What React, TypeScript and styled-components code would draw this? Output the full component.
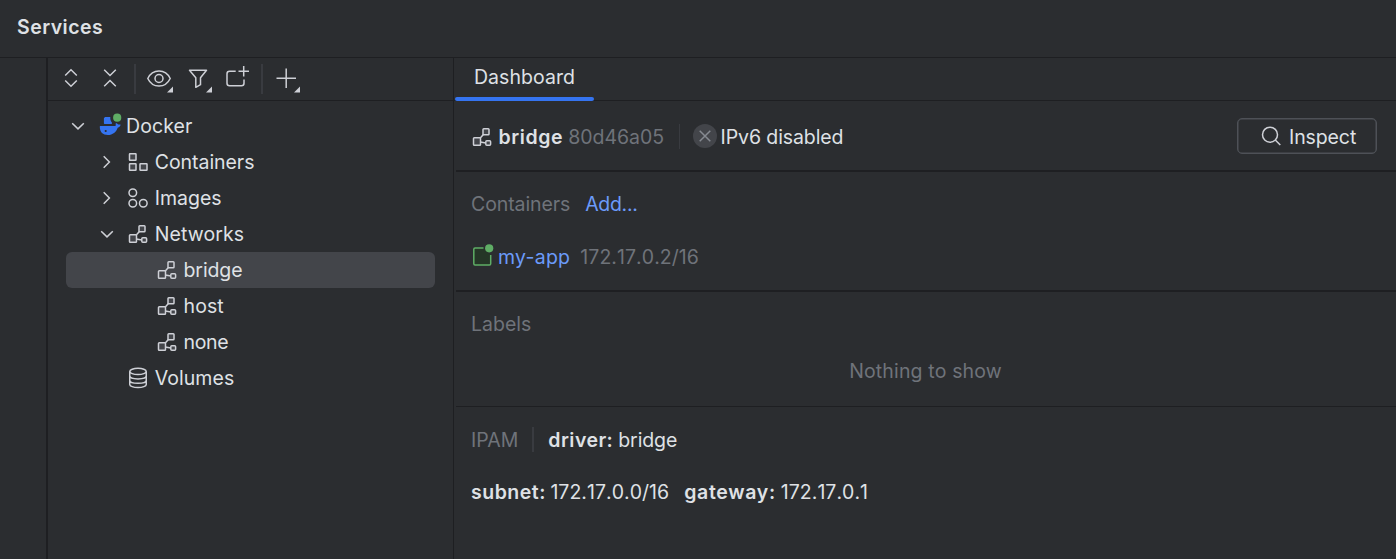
import React from "react";
import styled, { createGlobalStyle } from "styled-components";

const c = {
  bg: "#2b2d30",
  line: "#1e1f22",
  text: "#dfe1e5",
  muted: "#6f737a",
  link: "#6b9bfa",
  icon: "#ced0d6",
  fill: "#43454a",
  blue: "#3574f0",
  green: "#5fad65",
};

const GlobalStyle = createGlobalStyle`
  * { box-sizing: border-box; }
  body { margin: 0; background: ${c.bg}; overflow: hidden; }
`;

const Window = styled.div`
  display: flex;
  flex-direction: column;
  width: 1396px;
  height: 559px;
  background: ${c.bg};
  color: ${c.text};
  font: 400 19.5px/24px Inter, "Liberation Sans", sans-serif;
  white-space: nowrap;
`;

const Header = styled.header`
  display: flex;
  align-items: center;
  height: 58px;
  padding: 0 0 3px 17px;
  border-bottom: 1px solid ${c.line};
`;

const Text = styled.span<{ $tone?: string; $bold?: boolean; $track?: number }>`
  color: ${(p) => p.$tone ?? c.text};
  font-weight: ${(p) => (p.$bold ? 600 : 400)};
  letter-spacing: ${(p) => p.$track ?? 0}px;
`;

const Address = styled(Text)`
  font-kerning: none;
  font-feature-settings: "kern" 0, "calt" 0;
`;

const Body = styled.div`
  display: flex;
  flex: 1;
  min-height: 0;
`;

const Stripe = styled.div`
  width: 48px;
  border-right: 2px solid ${c.line};
`;

const Sidebar = styled.aside`
  width: 406px;
  border-right: 1px solid ${c.line};
`;

const Toolbar = styled.div`
  display: flex;
  align-items: center;
  height: 43px;
  padding: 0 0 2px 11px;
  border-bottom: 1px solid ${c.line};
`;

const ToolButton = styled.button<{ $gap: number }>`
  display: flex;
  padding: 0;
  margin-right: ${(p) => p.$gap}px;
  border: 0;
  background: none;
`;

const Divider = styled.i<{ $height: number; $width: number; $before: number; $after: number }>`
  width: ${(p) => p.$width}px;
  height: ${(p) => p.$height}px;
  margin: 0 ${(p) => p.$after}px 0 ${(p) => p.$before}px;
  background: #393b40;
`;

const ToolDivider = styled(Divider)`
  margin-top: 1px;
`;

const Tree = styled.ul`
  margin: 7px 18px 0;
  padding: 0;
  list-style: none;
`;

const TreeRow = styled.li<{ $depth: number; $selected?: boolean }>`
  display: flex;
  align-items: center;
  height: 36px;
  padding-left: ${(p) => p.$depth * 28.75}px;
  border-radius: 6px;
  background: ${(p) => (p.$selected ? c.fill : "transparent")};
`;

const Arrow = styled.span`
  display: flex;
  width: 24px;
  height: 24px;
  margin-right: 7.5px;
`;

const TreeIcon = styled.span`
  display: flex;
  margin-right: 4.5px;
`;

const Main = styled.main`
  flex: 1;
`;

const Tabs = styled.nav`
  display: flex;
  height: 43px;
  padding-left: 1px;
  border-bottom: 1px solid ${c.line};
`;

const Tab = styled.div`
  position: relative;
  width: 139px;
  padding: 7px 0 0 19px;
  &::after {
    content: "";
    position: absolute;
    left: 0;
    right: 0;
    bottom: -1px;
    height: 4px;
    border-radius: 2px;
    background: ${c.blue};
  }
`;

const Section = styled.section<{ $height: number; $rule: number }>`
  height: ${(p) => p.$height}px;
  margin-left: 2px;
  padding-left: 15px;
  border-bottom: ${(p) => p.$rule}px solid ${c.line};
`;

const Line = styled.div<{ $top: number }>`
  display: flex;
  align-items: center;
  padding-top: ${(p) => p.$top}px;
`;

const Details = styled.div`
  display: flex;
  align-items: center;
  padding-top: 1px;
  margin-left: -1px;
`;

const Gap = styled.span<{ $w: number }>`
  width: ${(p) => p.$w}px;
`;

const Empty = styled.div`
  padding: 23px 16px 0 0;
  text-align: center;
`;

const InspectButton = styled.button`
  display: flex;
  align-items: center;
  width: 140px;
  height: 36px;
  margin: 0 19px 0 auto;
  padding: 1px 0 0 21px;
  gap: 6px;
  border: 1.5px solid #4e5157;
  border-radius: 5px;
  background: none;
  font: inherit;
  box-shadow: inset 0 0 0 0.5px #4e5157;
`;

const Svg = ({ children }: { children: React.ReactNode }) => (
  <svg width="24" height="24" viewBox="0 0 24 24" fill="none" stroke={c.icon} strokeWidth="1.5" style={{ flex: "none", overflow: "visible" }}>
    {children}
  </svg>
);

const Corner = () => <path d="M26 20.500v6h-6z" fill={c.icon} stroke="none" />;

const NetworkIcon = () => (
  <Svg>
    <path d="M10.300 13l3.500-4M10.300 17l5.500 1" />
    <rect x="3.500" y="12.750" width="7" height="7.500" rx=".8" fill={c.fill} />
    <rect x="13" y="3.750" width="6" height="6" rx=".8" fill={c.fill} />
    <rect x="15.800" y="15.750" width="4.800" height="4.500" rx="1" fill={c.fill} />
  </Svg>
);

const ContainersIcon = () => (
  <Svg>
    <rect x="3.500" y="3.750" width="6.500" height="6.500" rx=".5" fill={c.fill} />
    <rect x="3.500" y="13.750" width="6.500" height="6.500" rx=".5" fill={c.fill} />
    <rect x="14" y="13.750" width="7" height="6.500" rx=".5" fill={c.fill} />
  </Svg>
);

const ImagesIcon = () => (
  <Svg>
    <circle cx="6.800" cy="6.800" r="3.800" />
    <circle cx="6.800" cy="17.200" r="3.800" />
    <circle cx="17.300" cy="17.200" r="3.800" />
  </Svg>
);

const VolumesIcon = () => (
  <Svg>
    <ellipse cx="12" cy="5.400" rx="8.250" ry="3.100" />
    <path d="M3.750 5.400v13c0 1.800 3.700 3.200 8.250 3.200s8.250-1.400 8.250-3.200v-13M3.750 9.800c0 1.800 3.700 3.100 8.250 3.100s8.250-1.300 8.250-3.100M3.750 14.200c0 1.800 3.700 3.100 8.250 3.100s8.250-1.300 8.250-3.100" />
  </Svg>
);

const DockerIcon = () => (
  <Svg>
    <g stroke="none">
      <path fill={c.blue} d="M7 3h5.300c-.2 2.500.5 4.300 1.700 5.700V9.500l-.6.600H6.500l-.6-.6V4.200zM2.200 12h15.100c.5-.4.6-1 .3-2.300l.5-.8c1 .3 1.700.9 2.100 1.700h2.300c0 1.700-1.100 2.800-2.800 3.100C18.300 18 14.700 21 9.900 21 4.900 21 1.800 18 1.800 13c0-.7.1-1 .4-1z" />
      <circle cx="7.700" cy="17" r="1.100" fill={c.bg} />
      <circle cx="19.200" cy="3.700" r="4.100" fill={c.green} />
    </g>
  </Svg>
);

const Chevron = ({ open }: { open?: boolean }) => (
  <Svg>{open ? <path d="M6.200 9.200l5.800 5.700 5.800-5.700" /> : <path d="M8.700 6.200l5.700 5.800-5.700 5.800" />}</Svg>
);

type Node = { label: string; depth: number; open?: boolean; leaf?: boolean; selected?: boolean; icon: React.ReactNode; track?: number };

const nodes: Node[] = [
  { label: "Docker", depth: 0, open: true, icon: <DockerIcon />, track: 0.1 },
  { label: "Containers", depth: 1, icon: <ContainersIcon />, track: -0.05 },
  { label: "Images", depth: 1, icon: <ImagesIcon />, track: 0 },
  { label: "Networks", depth: 1, open: true, icon: <NetworkIcon />, track: 0.1 },
  { label: "bridge", depth: 2, leaf: true, selected: true, icon: <NetworkIcon />, track: -0.1 },
  { label: "host", depth: 2, leaf: true, icon: <NetworkIcon />, track: 0.1 },
  { label: "none", depth: 2, leaf: true, icon: <NetworkIcon />, track: -0.3 },
  { label: "Volumes", depth: 1, leaf: true, icon: <VolumesIcon />, track: 0.05 },
];

export default function App() {
  return (
    <Window>
      <GlobalStyle />
      <Header>
        <Text $bold $track={0.47}>Services</Text>
      </Header>
      <Body>
        <Stripe />
        <Sidebar>
          <Toolbar>
            <ToolButton $gap={15}>
              <Svg><path d="M6.200 9.500L12 3.800l5.800 5.700M6.200 14.500l5.800 5.700 5.800-5.700" /></Svg>
            </ToolButton>
            <ToolButton $gap={12}>
              <Svg><path d="M6.200 3.800L12 9.500l5.800-5.700M6.200 20.200l5.800-5.700 5.800 5.700" /></Svg>
            </ToolButton>
            <ToolDivider $width={2} $height={30} $before={0} $after={11} />
            <ToolButton $gap={15}>
              <Svg>
                <path d="M.8 12.500C3 7.800 7 5 12 5S21 7.800 23.200 12.500C21 17.200 17 20 12 20S3 17.200.8 12.500z" />
                <circle cx="12" cy="12.500" r="4" />
                <Corner />
              </Svg>
            </ToolButton>
            <ToolButton $gap={15}>
              <Svg>
                <path d="M3.500 4.300h17l-6 7.500v6.900l-4.700 2.600v-9.500z" strokeLinejoin="round" />
                <Corner />
              </Svg>
            </ToolButton>
            <ToolButton $gap={12}>
              <Svg>
                <path d="M10.700 5.200H4.500A2.500 2.500 0 0 0 2 7.700v9.600a2.500 2.500 0 0 0 2.500 2.500h12a2.500 2.500 0 0 0 2.500-2.500V13.500M13.500 5.200H24M18.700 0V10.500" />
              </Svg>
            </ToolButton>
            <ToolDivider $width={2} $height={30} $before={0} $after={11} />
            <ToolButton $gap={0}>
              <Svg>
                <path d="M2.500 12.300H22M12.200 2.500V22" />
                <Corner />
              </Svg>
            </ToolButton>
          </Toolbar>
          <Tree>
            {nodes.map((n) => (
              <TreeRow key={n.label} $depth={n.depth} $selected={n.selected}>
                <Arrow>{!n.leaf && <Chevron open={n.open} />}</Arrow>
                <TreeIcon>{n.icon}</TreeIcon>
                <Text $track={n.track}>{n.label}</Text>
              </TreeRow>
            ))}
          </Tree>
        </Sidebar>
        <Main>
          <Tabs>
            <Tab><Text $track={0.05}>Dashboard</Text></Tab>
          </Tabs>
          <Section $height={71} $rule={2}>
            <Line $top={17}>
              <Details>
                <NetworkIcon />
                <Gap $w={4.5} />
                <Text $bold $track={0.6}>bridge</Text>
                <Gap $w={5} />
                <Text $tone={c.muted} $track={-0.03}>80d46a05</Text>
                <Divider $width={1} $height={25} $before={14.500} $after={13} />
                <Svg>
                  <circle cx="12" cy="11" r="12" fill={c.fill} stroke="none" />
                  <path d="M6.700 5.700l10.600 10.600M17.300 5.700L6.700 16.300" stroke="#868a91" />
                </Svg>
                <Gap $w={4} />
                <Text $track={-0.1}>IPv6 disabled</Text>
              </Details>
              <InspectButton>
                <Svg>
                  <circle cx="11" cy="9.700" r="7.500" />
                  <path d="M16.300 15l5 5" />
                </Svg>
                <Text $track={-0.1}>Inspect</Text>
              </InspectButton>
            </Line>
          </Section>
          <Section $height={120} $rule={2}>
            <Line $top={20}>
              <Text $tone={c.muted} $track={-0.1}>Containers</Text>
              <Gap $w={15} />
              <Text $tone={c.link} $track={-0.3}>Add...</Text>
            </Line>
            <Line $top={29}>
              <Svg>
                <path d="M12.500 3H4a1.200 1.200 0 0 0-1.200 1.200v14.600A1.200 1.200 0 0 0 4 20h14.500a1.200 1.200 0 0 0 1.200-1.200V10" fill="#253627" stroke={c.green} />
                <circle cx="18.200" cy="3.300" r="4.100" fill={c.green} stroke="none" />
              </Svg>
              <Gap $w={3} />
              <Text $tone={c.link} $track={0.25}>my-app</Text>
              <Gap $w={10} />
              <Address $tone={c.muted} $track={0.06}>172.17.0.2/16</Address>
            </Line>
          </Section>
          <Section $height={115} $rule={1}>
            <Line $top={20}>
              <Text $tone={c.muted}>Labels</Text>
            </Line>
            <Empty><Text $tone={c.muted} $track={0.15}>Nothing to show</Text></Empty>
          </Section>
          <Section $height={152} $rule={0}>
            <Line $top={20}>
              <Text $tone={c.muted}>IPAM</Text>
              <Divider $width={2} $height={25} $before={14} $after={14} />
              <Text $bold $track={0.45}>driver:</Text>
              <Gap $w={5} />
              <Text $track={-0.1}>bridge</Text>
            </Line>
            <Line $top={28}>
              <Text $bold $track={0.5}>subnet:</Text>
              <Gap $w={4.500} />
              <Address $track={0.03}>172.17.0.0/16</Address>
              <Gap $w={15} />
              <Text $bold $track={0.68}>gateway:</Text>
              <Gap $w={5} />
              <Address $track={0.03}>172.17.0.1</Address>
            </Line>
          </Section>
        </Main>
      </Body>
    </Window>
  );
}
